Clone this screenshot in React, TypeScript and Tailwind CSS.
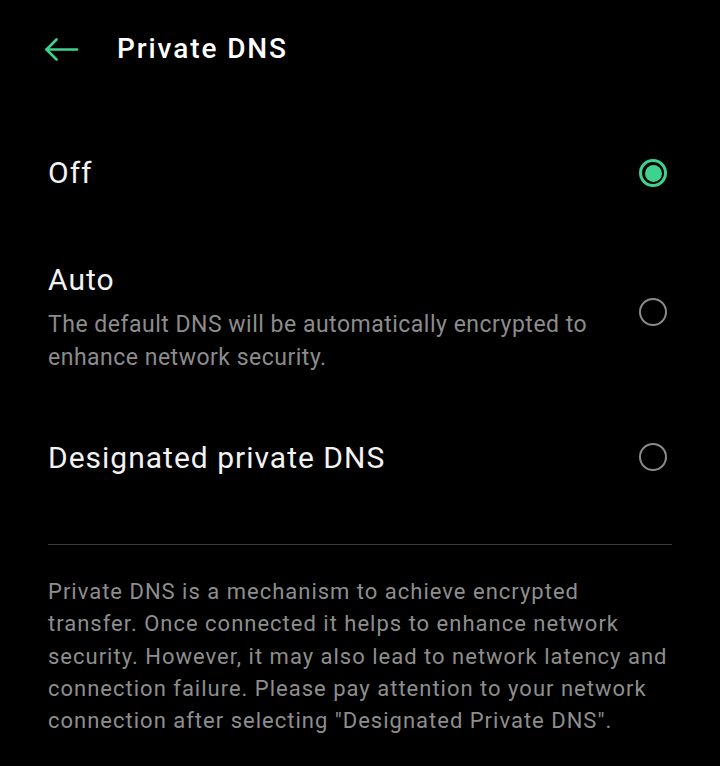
import { useState } from 'react';

type Mode = 'off' | 'auto' | 'designated';

function Radio({ checked }: { checked: boolean }) {
  if (checked) {
    return (
      <div className="flex h-[28px] w-[28px] items-center justify-center rounded-full border-[3px] border-[#3fd18e]">
        <div className="h-[17px] w-[17px] rounded-full bg-[#3fd18e]" />
      </div>
    );
  }
  return <div className="h-[28px] w-[28px] rounded-full border-2 border-[#8a8a8a]" />;
}

export default function App() {
  const [mode, setMode] = useState<Mode>('off');

  return (
    <div
      className="min-h-[766px] w-[720px] bg-black text-[#f2f2f2]"
      style={{ fontFamily: 'Roboto, "Noto Sans", sans-serif' }}
    >
      {/* header */}
      <div className="flex h-[98px] items-center">
        <button className="ml-[44px] flex h-[24px] w-[36px] items-center">
          <svg width="35" height="23" viewBox="0 0 35 23" fill="none" stroke="#3fd18e" strokeWidth="2.6" strokeLinecap="round" strokeLinejoin="round">
            <path d="M2.5 11.5H33" />
            <path d="M12.5 1.5L2.5 11.5L12.5 21.5" />
          </svg>
        </button>
        <h1 className="ml-[37px] text-[28px] font-medium leading-[32px] tracking-[1.9px] text-white">Private DNS</h1>
      </div>

      <div className="px-[48px]">
        {/* Off */}
        <div className="mt-[57px] flex items-center justify-between gap-[30px]" onClick={() => setMode('off')}>
          <span className="text-[30px] leading-[36px] tracking-[1px]">Off</span>
          <div className="mr-[5px]">
            <Radio checked={mode === 'off'} />
          </div>
        </div>

        {/* Auto */}
        <div className="mt-[71px] flex items-center justify-between gap-[30px]" onClick={() => setMode('auto')}>
          <div className="flex-1">
            <div className="text-[30px] leading-[36px] tracking-[1px]">Auto</div>
            <p className="mt-[10px] text-[23px] leading-[33px] tracking-[0.5px] text-[#8c8c8c]">
              The default DNS will be automatically encrypted to enhance network security.
            </p>
          </div>
          <div className="mb-[12px] mr-[5px]">
            <Radio checked={mode === 'auto'} />
          </div>
        </div>

        {/* Designated */}
        <div className="mt-[66px] flex items-center justify-between gap-[30px]" onClick={() => setMode('designated')}>
          <span className="text-[30px] leading-[36px] tracking-[1px]">Designated private DNS</span>
          <div className="mr-[5px] mb-[2px]">
            <Radio checked={mode === 'designated'} />
          </div>
        </div>

        <div className="mt-[68px] h-px bg-[#3d3d3d]" />

        <p className="mt-[31px] text-[22px] leading-[32.3px] tracking-[1px] text-[#8e8e8e]">
          Private DNS is a mechanism to achieve encrypted transfer. Once connected it helps to enhance network
          security. However, it may also lead to network latency and connection failure. Please pay attention to your
          network connection after selecting "Designated Private DNS".
        </p>
      </div>
    </div>
  );
}
